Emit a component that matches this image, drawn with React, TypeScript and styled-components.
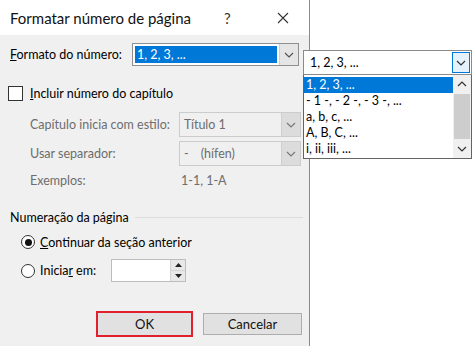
import styled, { createGlobalStyle } from "styled-components";

const GlobalStyle = createGlobalStyle`
  html, body {
    margin: 0;
    padding: 0;
    background: #ffffff;
    font-family: Lato, "Noto Sans", sans-serif;
    color: #000;
  }
`;

const Chevron = ({ dir = "down", color = "#555" }: { dir?: "down" | "up"; color?: string }) => (
  <svg width="10" height="6" viewBox="0 0 10 6">
    <polyline
      points={dir === "down" ? "1,1 5,5 9,1" : "1,5 5,1 9,5"}
      fill="none"
      stroke={color}
      strokeWidth="1.2"
    />
  </svg>
);

export default function App() {
  return (
    <>
      <GlobalStyle />
      <Screen>
        <Dialog>
          <TitleBar>
            <Title>Formatar número de página</Title>
            <Help>?</Help>
            <Close>
              <svg width="12" height="12" viewBox="0 0 12 12">
                <path d="M1 1 L11 11 M11 1 L1 11" stroke="#333" strokeWidth="1.1" />
              </svg>
            </Close>
          </TitleBar>
          <Body>
            <FormatRow>
              <Label>
                <u>F</u>ormato do número:
              </Label>
              <Combo $width={167} $height={23}>
                <ComboValue $selected>1, 2, 3, ...</ComboValue>
                <ComboButton>
                  <Chevron />
                </ComboButton>
              </Combo>
            </FormatRow>

            <CheckRow>
              <CheckBox />
              <span>
                <u>I</u>ncluir número do capítulo
              </span>
            </CheckRow>

            <IndentRow $top={12}>
              <Label $disabled>Capítulo inicia com estilo:</Label>
              <Combo $width={122} $height={25} $disabled>
                <ComboValue $disabled>Título 1</ComboValue>
                <ComboButton $disabled>
                  <Chevron color="#777" />
                </ComboButton>
              </Combo>
            </IndentRow>
            <IndentRow $top={4}>
              <Label $disabled>Usar separador:</Label>
              <Combo $width={122} $height={25} $disabled>
                <ComboValue $disabled>
                  -<Gap />(hífen)
                </ComboValue>
                <ComboButton $disabled>
                  <Chevron color="#777" />
                </ComboButton>
              </Combo>
            </IndentRow>
            <IndentRow $top={4}>
              <Label $disabled>Exemplos:</Label>
              <Example>1-1, 1-A</Example>
            </IndentRow>

            <GroupHeader>
              <span>Numeração da página</span>
              <GroupLine />
            </GroupHeader>

            <RadioRow $top={7}>
              <Radio $checked />
              <span>
                <u>C</u>ontinuar da seção anterior
              </span>
            </RadioRow>
            <RadioRow $top={8}>
              <Radio />
              <RadioLabel>
                Inicia<u>r</u> em:
              </RadioLabel>
              <Spin>
                <SpinField />
                <SpinButtons>
                  <SpinButton>
                    <svg width="7" height="4" viewBox="0 0 7 4">
                      <polygon points="0,4 3.5,0 7,4" fill="#222" />
                    </svg>
                  </SpinButton>
                  <SpinButton>
                    <svg width="7" height="4" viewBox="0 0 7 4">
                      <polygon points="0,0 3.5,4 7,0" fill="#222" />
                    </svg>
                  </SpinButton>
                </SpinButtons>
              </Spin>
            </RadioRow>

            <ButtonRow>
              <Button $primary>OK</Button>
              <Button>Cancelar</Button>
            </ButtonRow>
          </Body>
        </Dialog>

        <Popup>
          <PopupCombo>
            <span>1, 2, 3, ...</span>
            <PopupButton>
              <Chevron color="#333" />
            </PopupButton>
          </PopupCombo>
          <List>
            <Items>
              <Item $selected>1, 2, 3, ...</Item>
              <Item>- 1 -, - 2 -, - 3 -, ...</Item>
              <Item>a, b, c, ...</Item>
              <Item>A, B, C, ...</Item>
              <Item>i, ii, iii, ...</Item>
            </Items>
            <ScrollBar>
              <ScrollArrow>
                <Chevron dir="up" color="#333" />
              </ScrollArrow>
              <Thumb />
              <ScrollArrow>
                <Chevron color="#333" />
              </ScrollArrow>
            </ScrollBar>
          </List>
        </Popup>
      </Screen>
    </>
  );
}

const Screen = styled.div`
  position: relative;
  width: 474px;
  height: 346px;
  overflow: hidden;
  background: #fff;
`;

const Dialog = styled.div`
  width: 309px;
  height: 346px;
  border-right: 1px solid #8a8a8a;
  display: flex;
  flex-direction: column;
  font-size: 12.5px;
`;

const TitleBar = styled.div`
  height: 35px;
  background: #fff;
  display: flex;
  align-items: center;
  padding-left: 10px;
`;

const Title = styled.div`
  font-size: 15px;
  flex: 1;
  color: #111;
  white-space: nowrap;
`;

const Help = styled.div`
  width: 10px;
  font-size: 15px;
  color: #333;
  margin-right: 43px;
`;

const Close = styled.div`
  width: 12px;
  margin-right: 20px;
  display: flex;
  align-items: center;
`;

const Body = styled.div`
  flex: 1;
  background: #f0f0f0;
  padding-left: 8px;
  display: flex;
  flex-direction: column;
`;

const FormatRow = styled.div`
  margin-top: 8px;
  display: grid;
  grid-template-columns: 124px auto;
  align-items: center;
`;

const Label = styled.span<{ $disabled?: boolean }>`
  color: ${(p) => (p.$disabled ? "#6d6d6d" : "#000")};
  margin-left: 2px;
  white-space: nowrap;
`;

const Combo = styled.div<{ $width: number; $height: number; $disabled?: boolean }>`
  width: ${(p) => p.$width}px;
  height: ${(p) => p.$height}px;
  box-sizing: border-box;
  border: 1px solid ${(p) => (p.$disabled ? "#cccccc" : "#8f8f8f")};
  background: ${(p) => (p.$disabled ? "#f0f0f0" : "#fff")};
  display: flex;
  align-items: stretch;
`;

const ComboValue = styled.div<{ $selected?: boolean; $disabled?: boolean }>`
  flex: 1;
  margin: ${(p) => (p.$selected ? "2px" : "0")};
  padding-left: ${(p) => (p.$selected ? "2px" : "4px")};
  background: ${(p) => (p.$selected ? "#0078d7" : "transparent")};
  color: ${(p) => (p.$selected ? "#fff" : p.$disabled ? "#6d6d6d" : "#000")};
  display: flex;
  align-items: center;
  white-space: nowrap;
`;

const Gap = styled.span`
  display: inline-block;
  width: 12px;
`;

const ComboButton = styled.div<{ $disabled?: boolean }>`
  width: 18px;
  background: ${(p) => (p.$disabled ? "#dcdcdc" : "#e5e5e5")};
  border-left: 1px solid ${(p) => (p.$disabled ? "#cfcfcf" : "#d0d0d0")};
  display: flex;
  align-items: center;
  justify-content: center;
`;

const CheckRow = styled.div`
  margin-top: 20px;
  height: 14px;
  display: flex;
  align-items: center;
  gap: 7px;
`;

const CheckBox = styled.div`
  width: 15px;
  height: 15px;
  box-sizing: border-box;
  border: 1px solid #333;
  background: #fff;
`;

const IndentRow = styled.div<{ $top: number }>`
  margin-top: ${(p) => p.$top}px;
  margin-left: 20px;
  min-height: 20px;
  display: grid;
  grid-template-columns: 151px auto;
  align-items: center;
`;

const Example = styled.span`
  color: #6d6d6d;
  margin-left: 2px;
`;

const GroupHeader = styled.div`
  margin-top: 18px;
  height: 18px;
  display: flex;
  align-items: center;
  gap: 6px;
  margin-left: 2px;
  margin-right: 6px;
`;

const GroupLine = styled.div`
  flex: 1;
  height: 1px;
  background: #dcdcdc;
`;

const RadioRow = styled.div<{ $top: number }>`
  margin-top: ${(p) => p.$top}px;
  margin-left: 13px;
  min-height: 18px;
  display: flex;
  align-items: center;
  gap: 5px;
`;

const Radio = styled.div<{ $checked?: boolean }>`
  width: 14px;
  height: 14px;
  box-sizing: border-box;
  border: 1px solid #333;
  border-radius: 50%;
  background: #fff;
  display: flex;
  align-items: center;
  justify-content: center;
  &::after {
    content: "";
    width: 7px;
    height: 7px;
    border-radius: 50%;
    background: ${(p) => (p.$checked ? "#111" : "transparent")};
  }
`;

const RadioLabel = styled.span`
  width: 66px;
`;

const Spin = styled.div`
  width: 75px;
  height: 23px;
  box-sizing: border-box;
  border: 1px solid #bdbdbd;
  background: #fff;
  display: flex;
`;

const SpinField = styled.div`
  flex: 1;
`;

const SpinButtons = styled.div`
  width: 14px;
  display: flex;
  flex-direction: column;
  border-left: 1px solid #d4d4d4;
`;

const SpinButton = styled.div`
  flex: 1;
  background: #e8e8e8;
  display: flex;
  align-items: center;
  justify-content: center;
  & + & {
    border-top: 1px solid #d4d4d4;
  }
`;

const ButtonRow = styled.div`
  margin-top: 29px;
  margin-right: 7px;
  display: flex;
  justify-content: flex-end;
  align-items: center;
  gap: 10px;
`;

const Button = styled.div<{ $primary?: boolean }>`
  box-sizing: border-box;
  width: ${(p) => (p.$primary ? "97px" : "99px")};
  height: ${(p) => (p.$primary ? "26px" : "22px")};
  background: #e1e1e1;
  border: ${(p) => (p.$primary ? "2px solid #e0212d" : "1px solid #adadad")};
  display: flex;
  align-items: center;
  justify-content: center;
  font-size: 13px;
  color: #111;
`;

/* open dropdown list floating over the dialog edge */
const Popup = styled.div`
  position: absolute;
  left: 303px;
  top: 50px;
  width: 169px;
  font-size: 12.5px;
`;

const PopupCombo = styled.div`
  height: 25px;
  box-sizing: border-box;
  border: 1px solid #8a8a8a;
  background: #fff;
  display: flex;
  align-items: center;
  padding-left: 6px;
  justify-content: space-between;
`;

const PopupButton = styled.div`
  width: 18px;
  height: 21px;
  box-sizing: border-box;
  margin-right: 1px;
  border: 1px solid #0078d7;
  background: #e5f1fb;
  display: flex;
  align-items: center;
  justify-content: center;
`;

const List = styled.div`
  height: 84px;
  box-sizing: border-box;
  border: 1px solid #646464;
  border-top: none;
  background: #fff;
  display: flex;
`;

const Items = styled.div`
  flex: 1;
  padding-top: 2px;
  display: flex;
  flex-direction: column;
`;

const Item = styled.div<{ $selected?: boolean }>`
  height: 16px;
  line-height: 16px;
  padding-left: 2px;
  background: ${(p) => (p.$selected ? "#0078d7" : "transparent")};
  color: ${(p) => (p.$selected ? "#fff" : "#000")};
  white-space: nowrap;
`;

const ScrollBar = styled.div`
  width: 18px;
  background: #f0f0f0;
  display: flex;
  flex-direction: column;
`;

const ScrollArrow = styled.div`
  height: 18px;
  display: flex;
  align-items: center;
  justify-content: center;
`;

const Thumb = styled.div`
  flex: 1;
  margin: 1px 1px;
  background: #cdcdcd;
`;
